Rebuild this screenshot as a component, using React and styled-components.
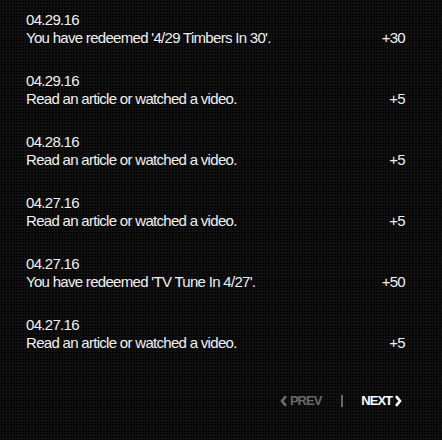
import React from 'react';
import styled, { createGlobalStyle } from 'styled-components';

const GlobalStyle = createGlobalStyle`
    html, body {
        margin:0;
        padding:0;
        background-color:#050505;
    }
    body {
        font-family: "Liberation Sans", Arial, sans-serif;
    }
`

const Page = styled.div`
    width:442px;
    height:440px;
    box-sizing:border-box;
    padding:11px 37px 0 26px;
    background-color:#050505;
    background-image:
        linear-gradient(to right, #121212 1px, transparent 1px),
        linear-gradient(to bottom, #121212 1px, transparent 1px);
    background-size:3px 3px;
    color:#f0f0f0;
`

const List = styled.ul`
    list-style:none;
    margin:0;
    padding:0;
    display:flex;
    flex-direction:column;
    gap:25px;
`

const Item = styled.li`
    display:flex;
    justify-content:space-between;
    align-items:flex-end;
    font-size:15px;
    line-height:18px;
    letter-spacing:-0.7px;
`

const Info = styled.div`
    display:flex;
    flex-direction:column;
`

const Date = styled.span``

const Text = styled.span``

const Points = styled.span``

const Pager = styled.nav`
    display:flex;
    justify-content:flex-end;
    align-items:center;
    margin-top:41px;
    padding-right:3px;
    font-size:13px;
    font-weight:bold;
    letter-spacing:-1px;
`

const PageLink = styled.a`
    display:flex;
    align-items:center;
    gap:2px;
    color:${props => props.disabled ? '#6a6a6a' : '#ffffff'};
    text-decoration:none;
`

const Divider = styled.span`
    width:2px;
    height:12px;
    background-color:#6a6a6a;
    margin:0 18px 0 20px;
`

const Chevron = ({dir}) => (
    <svg width="8" height="12" viewBox="0 0 8 12">
        <path
            d={dir === 'left' ? 'M6 1.2 L2 6 L6 10.8' : 'M2 1.2 L6 6 L2 10.8'}
            fill="none"
            stroke="currentColor"
            strokeWidth="2.6"
        />
    </svg>
)

const entries = [
    {date:'04.29.16', text:"You have redeemed '4/29 Timbers In 30'.", points:'+30'},
    {date:'04.29.16', text:'Read an article or watched a video.', points:'+5'},
    {date:'04.28.16', text:'Read an article or watched a video.', points:'+5'},
    {date:'04.27.16', text:'Read an article or watched a video.', points:'+5'},
    {date:'04.27.16', text:"You have redeemed 'TV Tune In 4/27'.", points:'+50'},
    {date:'04.27.16', text:'Read an article or watched a video.', points:'+5'},
]

const App = () => {
    return (
        <Page>
            <GlobalStyle/>
            <List>
                {entries.map((e, i) => (
                    <Item key={i}>
                        <Info>
                            <Date>{e.date}</Date>
                            <Text>{e.text}</Text>
                        </Info>
                        <Points>{e.points}</Points>
                    </Item>
                ))}
            </List>
            <Pager>
                <PageLink disabled><Chevron dir="left"/>PREV</PageLink>
                <Divider/>
                <PageLink href="#">NEXT<Chevron dir="right"/></PageLink>
            </Pager>
        </Page>
    )
}

export default App;
